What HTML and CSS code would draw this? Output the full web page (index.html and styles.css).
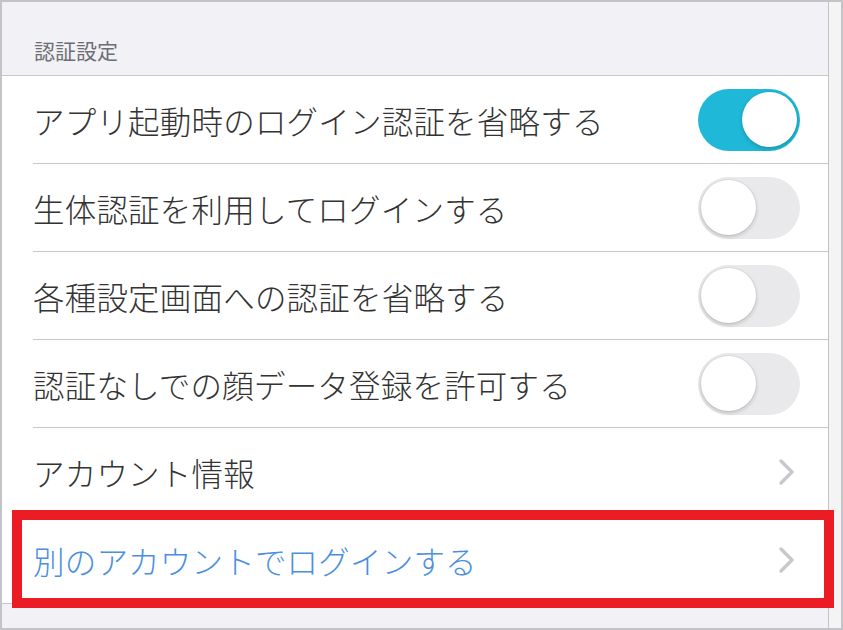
FILE: index.html
```html
<!DOCTYPE html>
<html lang="ja">
<head>
    <meta charset="UTF-8">
    <meta name="viewport" content="width=device-width, initial-scale=1.0">
    <title>認証設定</title>
    <link rel="stylesheet" href="styles.css">
</head>
<body>
    <div class="frame">
        <main class="settings">
            <div class="section-title">認証設定</div>
            <ul class="list">
                <li class="row">
                    <span class="label">アプリ起動時のログイン認証を省略する</span>
                    <span class="switch on"><span class="knob"></span></span>
                </li>
                <li class="row">
                    <span class="label">生体認証を利用してログインする</span>
                    <span class="switch"><span class="knob"></span></span>
                </li>
                <li class="row">
                    <span class="label">各種設定画面への認証を省略する</span>
                    <span class="switch"><span class="knob"></span></span>
                </li>
                <li class="row">
                    <span class="label">認証なしでの顔データ登録を許可する</span>
                    <span class="switch"><span class="knob"></span></span>
                </li>
                <li class="row">
                    <span class="label">アカウント情報</span>
                    <svg class="chevron" width="16" height="26" viewBox="0 0 16 26"><path d="M2 2 L13 13 L2 24" /></svg>
                </li>
                <li class="row last highlighted">
                    <span class="label link">別のアカウントでログインする</span>
                    <svg class="chevron" width="16" height="26" viewBox="0 0 16 26"><path d="M2 2 L13 13 L2 24" /></svg>
                </li>
            </ul>
            <div class="footer-space"></div>
        </main>
        <div class="scroll-strip"></div>
    </div>
</body>
</html>
```

FILE: styles.css
```css
* {
    box-sizing: border-box;
}
body {
    margin: 0;
    padding: 0;
    background-color: #ffffff;
    font-family: "Noto Sans CJK JP", "Noto Sans", sans-serif;
}
.frame {
    width: 843px;
    height: 630px;
    border: 2px solid #c4c4c8;
    display: flex;
    overflow: hidden;
}
.settings {
    width: 826px;
    display: flex;
    flex-direction: column;
    background-color: #f1f1f6;
}
.scroll-strip {
    flex: 1;
    border-left: 1px solid #c4c4c8;
    background-color: #f4f4f4;
}
.section-title {
    height: 74px;
    padding: 33px 0 0 32px;
    font-size: 21px;
    color: #6d6d72;
    border-bottom: 1px solid #c8c8cc;
}
.list {
    list-style: none;
    margin: 0;
    padding: 0 0 0 31px;
    background-color: #ffffff;
}
.row {
    position: relative;
    height: 88px;
    display: flex;
    align-items: center;
    justify-content: space-between;
    padding-right: 28px;
    border-bottom: 1px solid #c8c8cc;
}
.row.last {
    margin-left: -31px;
    padding-left: 31px;
}
.label {
    font-size: 31.5px;
    font-weight: 300;
    color: #333333;
    letter-spacing: 0.2px;
}
.label.link {
    color: #4a8fe0;
}
.switch {
    position: relative;
    width: 102px;
    height: 62px;
    border-radius: 31px;
    background-color: #e9e9eb;
    display: flex;
    align-items: center;
    padding: 0 3px;
}
.switch.on {
    background-color: #1fb8d8;
    justify-content: flex-end;
}
.knob {
    width: 55px;
    height: 55px;
    border-radius: 50%;
    background-color: #ffffff;
    box-shadow: 0 2px 4px rgba(0, 0, 0, 0.18), 0 0 0 1px rgba(0, 0, 0, 0.04);
}
.chevron {
    margin-right: 5px;
}
.chevron path {
    fill: none;
    stroke: #c7c7cc;
    stroke-width: 3.2;
    stroke-linecap: round;
    stroke-linejoin: round;
}
.highlighted::after {
    content: "";
    position: absolute;
    left: 10px;
    right: -6px;
    top: -6px;
    bottom: -5px;
    border: 10px solid #ec1c24;
}
.footer-space {
    flex: 1;
}
```
